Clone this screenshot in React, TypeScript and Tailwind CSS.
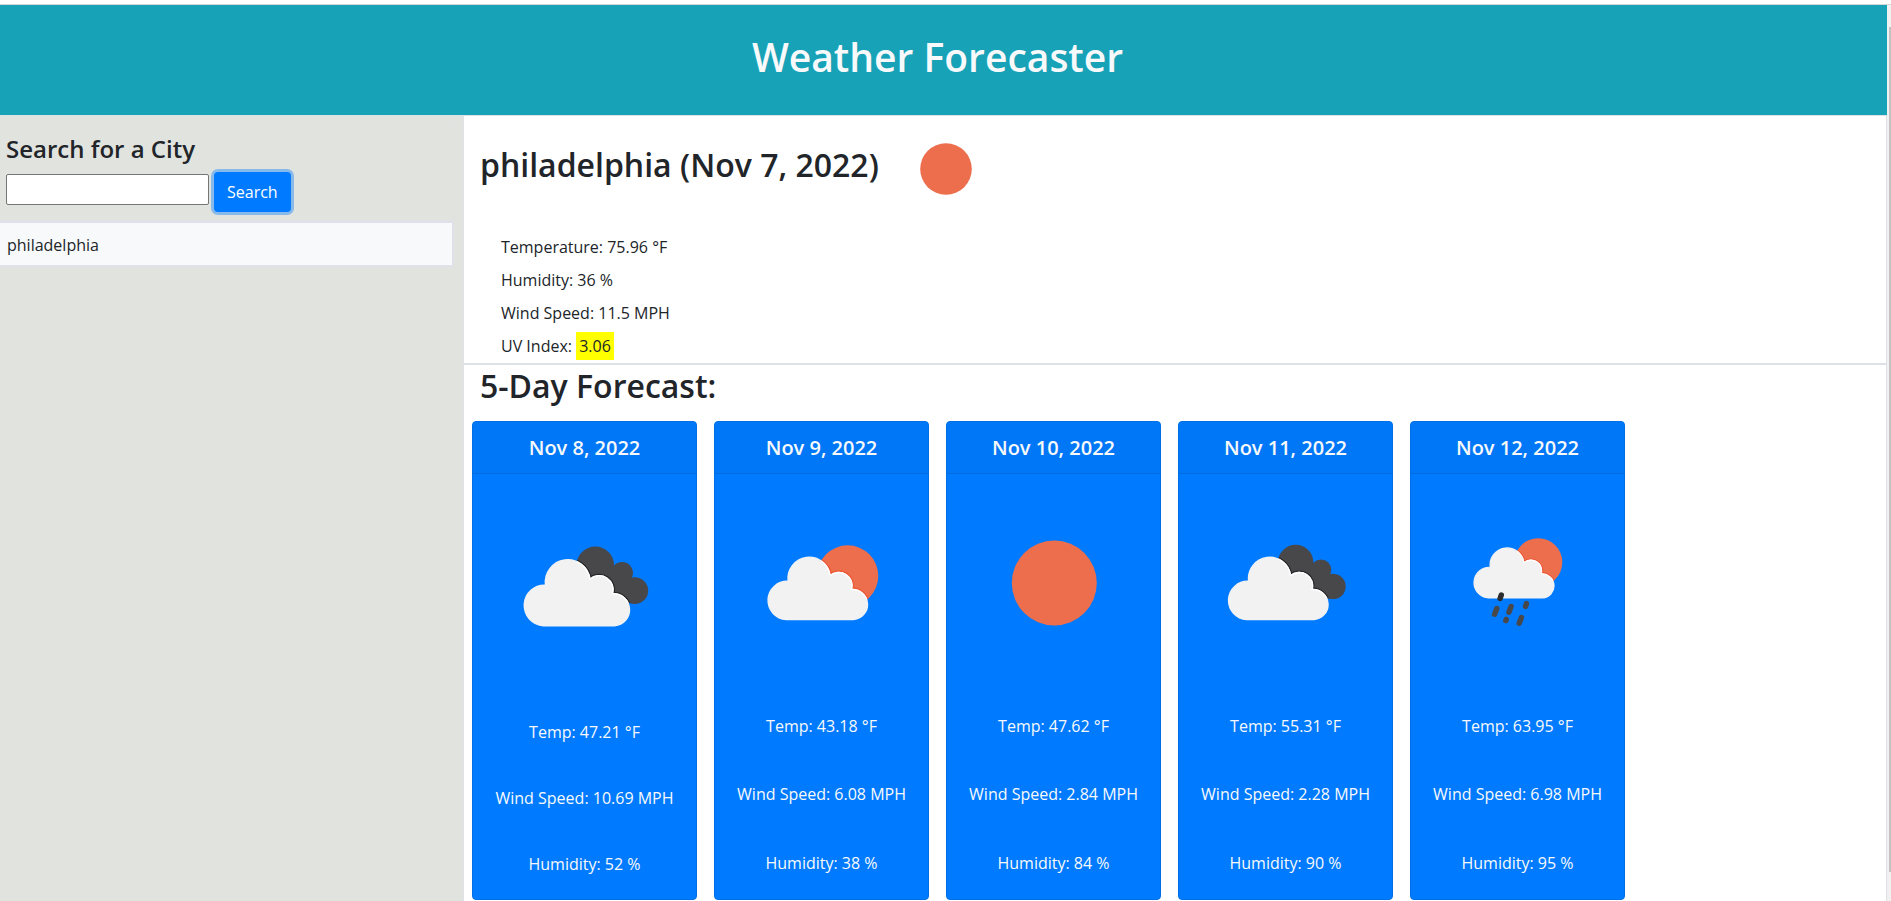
import React from "react";

type IconName = "clouds" | "partly" | "sun" | "rain";

const CLOUD =
  "M47.7 123.5A19.1 19.1 0 1 1 49.7 85.3A21 21 0 1 1 91.6 79.6A13.3 13.3 0 0 1 113 93.5A15 15 0 0 1 115 123.5Z";

const cloudShift: Record<IconName, string> = {
  clouds: "translate(0 0)",
  partly: "translate(3.5 0)",
  sun: "translate(0 0)",
  rain: "translate(19.2 2.6) scale(0.805)",
};

function Backdrop({ name }: { name: IconName }) {
  if (name === "clouds") {
    return (
      <>
        <circle cx="96.7" cy="66.4" r="17.7" />
        <circle cx="122" cy="73.7" r="10.3" />
        <circle cx="134" cy="90.4" r="12.7" />
        <path d="M90 66L112 68L124 78L130 102L95 100Z" />
      </>
    );
  }
  if (name === "partly") return <circle cx="112.7" cy="79.9" r="30.6" />;
  if (name === "rain") return <circle cx="107.3" cy="66.2" r="24" />;
  return <circle cx="87.3" cy="87" r="42.5" />;
}

function WeatherIcon({ name, id }: { name: IconName; id: string }) {
  const dark = name === "clouds";
  return (
    <svg viewBox="0 0 173 173" className="block aspect-square w-full" aria-hidden="true">
      <defs>
        <mask id={id}>
          <g fill="white">
            <Backdrop name={name} />
          </g>
        </mask>
      </defs>
      <g className={dark ? "fill-[#48484a]" : "fill-[#ec6e4c]"}>
        <Backdrop name={name} />
      </g>
      {name !== "sun" && (
        <>
          <g mask={`url(#${id})`}>
            <path
              d={CLOUD}
              transform={cloudShift[name]}
              strokeWidth="4"
              className={dark ? "fill-none stroke-[#28282a]" : "fill-none stroke-[#ee5533]"}
            />
          </g>
          <path
            d={CLOUD}
            transform={cloudShift[name]}
            strokeWidth="1.4"
            className="fill-[#f2f2f2] stroke-[#f2f2f2]"
          />
          <g mask={`url(#${id})`}>
            <path d={CLOUD} transform={cloudShift[name]} strokeWidth="1.4" className="fill-none stroke-white" />
          </g>
        </>
      )}
      {name === "rain" && (
        <g strokeWidth="5.4" strokeLinecap="round" className="stroke-[#48484a]">
          <path d="M70.3 99L69.1 102.4" className="stroke-[#2c2c2e]" />
          <path d="M65.8 112.6L63.6 118.2" />
          <path d="M80.1 110.6L77.9 116.2" />
          <path d="M95.5 107.6L94.5 110.4" />
          <path d="M75.3 123.4L74.8 124.6" />
          <path d="M90.4 121.6L88.2 127.2" />
        </g>
      )}
    </svg>
  );
}

interface Day {
  date: string;
  icon: IconName;
  temp: string;
  wind: string;
  humidity: string;
}

const days: Day[] = [
  { date: "Nov 8, 2022", icon: "clouds", temp: "47.21", wind: "10.69", humidity: "52" },
  { date: "Nov 9, 2022", icon: "partly", temp: "43.18", wind: "6.08", humidity: "38" },
  { date: "Nov 10, 2022", icon: "sun", temp: "47.62", wind: "2.84", humidity: "84" },
  { date: "Nov 11, 2022", icon: "clouds", temp: "55.31", wind: "2.28", humidity: "90" },
  { date: "Nov 12, 2022", icon: "rain", temp: "63.95", wind: "6.98", humidity: "95" },
];

function DayCard({ day, id, wide }: { day: Day; id: string; wide: boolean }) {
  return (
    <article
      className={
        (wide ? "w-[225px]" : "w-[215px]") +
        " flex shrink-0 flex-col rounded-sm border border-[#006fe6] bg-[#007bff] text-center text-[#f8f9fa]"
      }
    >
      <h3 className="border-b border-[#006bdf] bg-[#0077f7] pt-3.5 pb-[13px] text-xl leading-6 font-semibold">
        {day.date}
      </h3>
      <div className="flex flex-1 flex-col justify-around px-5 pb-0.5">
        <WeatherIcon name={day.icon} id={id} />
        <p className="whitespace-nowrap">Temp: {day.temp} °F</p>
        <p className="whitespace-nowrap">Wind Speed: {day.wind} MPH</p>
        <p className="whitespace-nowrap">Humidity: {day.humidity} %</p>
      </div>
    </article>
  );
}

export default function App() {
  return (
    <div className="flex min-h-screen flex-col bg-white pt-1 font-['Open_Sans',sans-serif] text-base leading-6 text-[#212529]">
      <div className="flex flex-1 border-t border-[#d5d8da]">
        <div className="flex flex-1 flex-col">
          <header className="border-b border-[#dee2e6] bg-[#17a2b8] pt-7 pr-3 pb-[34px] text-center">
            <h1 className="text-[39px] leading-12 font-semibold text-[#f8f9fa]">Weather Forecaster</h1>
          </header>
          <div className="flex flex-1">
            <aside className="w-[464px] shrink-0 border-r border-[#dee2e6] bg-[#e1e3de] pt-1.5 pr-[9px]">
              <form
                className="border-t border-r border-[#dfe1e3] pt-2 pb-2 pl-1.5"
                onSubmit={(e) => e.preventDefault()}
              >
                <label htmlFor="city" className="block text-2xl leading-9 font-semibold">
                  Search for a City
                </label>
                <div className="mt-[5px] flex items-center gap-[5px]">
                  <input
                    id="city"
                    className="mb-1.5 h-[31px] w-[203px] rounded-xs border border-[#767676] bg-white px-1"
                  />
                  <button className="h-10 rounded-sm bg-[#007bff] px-[13px] text-white ring-3 ring-[#007bff]/40">
                    Search
                  </button>
                </div>
              </form>
              <ul className="border-t-3 border-r-2 border-b-2 border-[#dfe1e8]">
                <li className="bg-[#f8f9fa] px-[7px] pt-2.5 pb-2">philadelphia</li>
              </ul>
            </aside>
            <main className="flex flex-1 flex-col border-r border-[#dee2e6]">
              <section className="border-b-2 border-[#dee2e6]">
                <div className="flex h-[106px] items-center gap-[41px] pl-4">
                  <h2 className="pb-2 text-[32px] leading-10 font-semibold">philadelphia (Nov 7, 2022)</h2>
                  <svg viewBox="0 0 52 52" className="size-[52px]" aria-hidden="true">
                    <circle cx="26" cy="26" r="25.8" className="fill-[#ec6e4c]" />
                  </svg>
                </div>
                <div className="pt-[9px] pl-[37px] leading-[33px]">
                  <p>Temperature: 75.96 °F</p>
                  <p>Humidity: 36 %</p>
                  <p>Wind Speed: 11.5 MPH</p>
                  <p>
                    UV Index: <span className="bg-[yellow] px-[3px] py-[3px]">3.06</span>
                  </p>
                </div>
              </section>
              <h2 className="mb-3.5 pl-4 text-[32px] leading-[42px] font-semibold">5-Day Forecast:</h2>
              <div className="flex flex-1 gap-[17px] pb-px pl-2">
                {days.map((day, i) => (
                  <DayCard key={day.date} day={day} id={"back" + i} wide={i === 0} />
                ))}
              </div>
            </main>
          </div>
        </div>
        <div className="flex w-1 flex-col bg-[#f1f1f1] pt-[22px] pb-[29px] pl-0.5">
          <div className="flex-1 bg-[#c1c1c1]" />
        </div>
      </div>
    </div>
  );
}
